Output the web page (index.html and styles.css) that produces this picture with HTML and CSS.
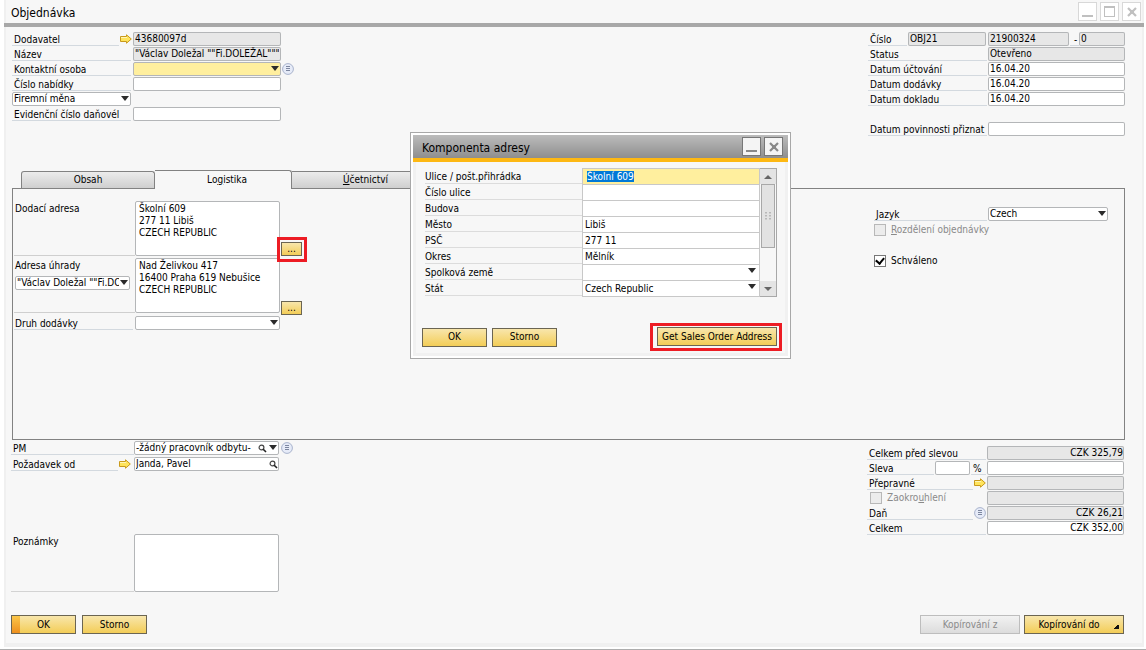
FILE: index.html
```html
<!DOCTYPE html>
<html lang="cs">
<head>
  <meta charset="UTF-8">
  <meta name="viewport" content="width=device-width, initial-scale=1.0">
  <title>Objednávka</title>
  <link rel="stylesheet" href="styles.css">
</head>
<body>
  <!-- shared icons -->
  <svg class="defs" width="0" height="0">
    <symbol id="arrow" viewBox="0 0 12 10">
      <path d="M.5 2.500h6V.8L11.300 5 6.500 9.200V7.500h-6z" fill="#ffe45c" stroke="#c99a1c"/>
      <path d="M1 3.500h6" stroke="#fff6b8"/>
    </symbol>
    <symbol id="list" viewBox="0 0 12 12">
      <circle cx="6" cy="6" r="5.400" fill="#e6ebf8" stroke="#a9b3cc"/>
      <path d="M4 3.500h4M4 5.500h4M4 7.500h4" stroke="#7d87a0"/>
    </symbol>
    <symbol id="lens" viewBox="0 0 9 9">
      <circle cx="3.500" cy="3.500" r="2.400" fill="#fff" stroke="#444" stroke-width="1.200"/>
      <path d="M5.200 5.200l2.800 2.800" stroke="#222" stroke-width="1.600"/>
    </symbol>
    <symbol id="cross" viewBox="0 0 10 10">
      <path d="M1 1l8 8M9 1L1 9" stroke="currentColor" stroke-width="2.200"/>
      <path d="M3 3h4v4H3z" fill="currentColor"/>
    </symbol>
  </svg>

  <main class="window">
    <header class="titlebar">
      <h1>Objednávka</h1>
      <div class="winButtons">
        <button class="winBtn" aria-label="Minimalizovat"><span class="minIcon"></span></button>
        <button class="winBtn" aria-label="Maximalizovat"><span class="maxIcon"></span></button>
        <button class="winBtn" aria-label="Zavřít"><svg width="10" height="10"><use href="#cross"/></svg></button>
      </div>
    </header>

    <section class="top">
      <div class="form left">
        <div class="row"><label class="lbl short" for="dodavatel">Dodavatel</label><svg class="arrow"><use href="#arrow"/></svg><input class="field" id="dodavatel" value="43680097d" readonly></div>
        <div class="row"><label class="lbl" for="nazev">Název</label><input class="field" id="nazev" value='"Václav Doležal ""Fi.DOLEŽAL"""' readonly></div>
        <div class="row"><label class="lbl" for="osoba">Kontaktní osoba</label><span class="drop yellow"><select id="osoba"><option></option></select></span><svg class="list"><use href="#list"/></svg></div>
        <div class="row"><label class="lbl" for="nabidka">Číslo nabídky</label><input class="field" id="nabidka"></div>
        <div class="row"><span class="drop currency"><select aria-label="Měna"><option>Firemní měna</option></select></span></div>
        <div class="row"><label class="lbl" for="evidence">Evidenční číslo daňovél</label><input class="field" id="evidence"></div>
      </div>

      <div class="form right">
        <div class="row">
          <label class="lbl num" for="serie">Číslo</label><input class="field serie" id="serie" value="OBJ21" readonly>
          <input class="field docnum" aria-label="Číslo dokladu" value="21900324" readonly><span class="lbl dash">-</span><input class="field sub" aria-label="Podčíslo" value="0" readonly>
        </div>
        <div class="row"><label class="lbl" for="status">Status</label><input class="field" id="status" value="Otevřeno" readonly></div>
        <div class="row"><label class="lbl" for="uctovani">Datum účtování</label><input class="field" id="uctovani" value="16.04.20"></div>
        <div class="row"><label class="lbl" for="dodavky">Datum dodávky</label><input class="field" id="dodavky" value="16.04.20"></div>
        <div class="row"><label class="lbl" for="dokladu">Datum dokladu</label><input class="field" id="dokladu" value="16.04.20"></div>
        <div class="row"></div>
        <div class="row"><label class="lbl" for="povinnost">Datum povinnosti přiznat</label><input class="field" id="povinnost"></div>
      </div>
    </section>

    <nav class="tabs">
      <button class="tab">Obsah</button>
      <button class="tab active">Lo<u>g</u>istika</button>
      <button class="tab"><u>Ú</u>četnictví</button>
    </nav>

    <section class="panel">
      <div class="addresses">
        <div class="address">
          <div class="side"><label for="dodaci">Dodací adresa</label></div>
          <textarea id="dodaci" class="area">Školní 609
277 11 Libiš
CZECH REPUBLIC</textarea>
          <span class="mark small"><button class="btn dots">...</button></span>
        </div>
        <div class="address">
          <div class="side">
            <label for="uhrada">Adresa úhrady</label>
            <span class="drop payer"><select aria-label="Adresa plátce"><option>"Václav Doležal ""Fi.DOLEŽAL"""</option></select></span>
          </div>
          <textarea id="uhrada" class="area">Nad Želivkou 417
16400 Praha 619 Nebušice
CZECH REPUBLIC</textarea>
          <button class="btn dots">...</button>
        </div>
        <div class="row"><label class="lbl" for="druh">Druh dodávky</label><span class="drop"><select id="druh"><option></option></select></span></div>
      </div>

      <div class="options">
        <div class="row"><label class="lbl" for="jazyk">Jazyk</label><span class="drop"><select id="jazyk"><option>Czech</option></select></span></div>
        <label class="check off"><input type="checkbox" disabled><span><u>R</u>ozdělení objednávky</span></label>
        <label class="check approved"><input type="checkbox" checked><span>Schváleno</span></label>
      </div>
    </section>

    <section class="bottom">
      <div class="form owner">
        <div class="row"><label class="lbl" for="pm">PM</label><span class="drop pm"><select id="pm"><option>-žádný pracovník odbytu-</option></select><svg class="lens"><use href="#lens"/></svg></span><svg class="list"><use href="#list"/></svg></div>
        <div class="row"><label class="lbl short" for="pozadavek">Požadavek od</label><svg class="arrow"><use href="#arrow"/></svg><span class="search"><input class="field" id="pozadavek" value="Janda, Pavel"><svg class="lens"><use href="#lens"/></svg></span></div>
        <div class="notes"><label for="poznamky">Poznámky</label><textarea class="area" id="poznamky"></textarea></div>
      </div>

      <div class="form right totals">
        <div class="row"><label class="lbl" for="pred">Celkem před slevou</label><input class="field" id="pred" value="CZK 325,79" readonly></div>
        <div class="row"><label class="lbl disc" for="sleva">Sleva</label><input class="field pct" id="sleva"><span class="lbl sign">%</span><input class="field" aria-label="Částka slevy"></div>
        <div class="row"><label class="lbl short" for="prepravne">Přepravné</label><svg class="arrow"><use href="#arrow"/></svg><input class="field" id="prepravne" readonly></div>
        <div class="row"><label class="check off"><input type="checkbox" disabled><span>Zaokro<u>u</u>hlení</span></label><input class="field" aria-label="Zaokrouhlení" readonly></div>
        <div class="row"><label class="lbl short" for="dan">Daň</label><svg class="list"><use href="#list"/></svg><input class="field" id="dan" value="CZK 26,21" readonly></div>
        <div class="row"><label class="lbl" for="celkem">Celkem</label><input class="field" id="celkem" value="CZK 352,00"></div>
      </div>
    </section>

    <footer class="actions">
      <button class="btn primary">OK</button>
      <button class="btn">Storno</button>
      <span class="spacer"></span>
      <button class="btn wide" disabled>Kopírování z</button>
      <button class="btn wide more">Kopírování do</button>
    </footer>
  </main>

  <div class="dialog" role="dialog" aria-labelledby="dlgTitle">
    <header class="dlgTitle">
      <h2 id="dlgTitle">Komponenta adresy</h2>
      <div class="winButtons">
        <button class="winBtn" aria-label="Minimalizovat"><span class="minIcon"></span></button>
        <button class="winBtn" aria-label="Zavřít"><svg width="10" height="10"><use href="#cross"/></svg></button>
      </div>
    </header>
    <div class="dlgBody">
      <div class="grid">
        <div class="cells">
          <label for="ulice">Ulice / pošt.přihrádka</label><input id="ulice" class="current" value="Školní 609">
          <label for="cislo">Číslo ulice</label><input id="cislo">
          <label for="budova">Budova</label><input id="budova">
          <label for="mesto">Město</label><input id="mesto" value="Libiš">
          <label for="psc">PSČ</label><input id="psc" value="277 11">
          <label for="okres">Okres</label><input id="okres" value="Mělník">
          <label for="zeme">Spolková země</label><span class="drop"><select id="zeme"><option></option></select></span>
          <label for="stat">Stát</label><span class="drop"><select id="stat"><option>Czech Republic</option></select></span>
        </div>
        <div class="scroll">
          <span class="up"></span>
          <span class="thumb"><svg width="6" height="8"><path d="M1 0v8M5 0v8" stroke="#aaa" stroke-width="1.500" stroke-dasharray="1.500 1.500"/></svg></span>
          <span class="down"></span>
        </div>
      </div>
      <div class="dlgActions">
        <button class="btn">OK</button>
        <button class="btn">Storno</button>
        <span class="spacer"></span>
        <span class="mark"><button class="btn get">Get Sales Order Address</button></span>
      </div>
    </div>
  </div>

  <script>
    // first cell is being edited
    const street = document.getElementById("ulice");
    street.focus();
    street.select();
  </script>
</body>
</html>
```

FILE: styles.css
```css
* {
  box-sizing: border-box;
}

body {
  margin: 0;
  padding: 0 2px 2px 4px;
  min-height: 100vh;
  display: flex;
  background: #fff;
  border-bottom: 1px solid #adadad;
  color: #000;
}

body, input, select, textarea, button {
  font-family: "DejaVu Sans Condensed", "DejaVu Sans", Tahoma, sans-serif;
  font-size: 10px;
  line-height: 12px;
}

input, select, textarea, button {
  margin: 0;
  outline: none;
}

.defs {
  position: absolute;
}

.window {
  flex: 1;
  display: flex;
  flex-direction: column;
  background: #f7f7f7;
  border: solid #f0f0f0;
  border-width: 0 2px 4px;
}

/* title bars */
.titlebar {
  display: flex;
  justify-content: space-between;
  align-items: center;
  height: 27px;
  margin: 0 -2px;
  padding: 0 3px 0 7px;
  border-bottom: 4px solid #a8a8a8;
}

h1, h2 {
  margin: 0;
  font-size: 12px;
  line-height: 16px;
  font-weight: normal;
}

.titlebar h1, .dlgTitle h2 {
  padding-top: 2px;
}

.winButtons {
  display: flex;
  gap: 3px;
}

.winBtn {
  display: flex;
  align-items: center;
  justify-content: center;
  width: 19px;
  height: 19px;
  padding: 0;
  border: 1px solid #d8d8d8;
  background: #fff;
  color: #c0c0c0;
}

.minIcon {
  width: 11px;
  height: 11px;
  border-bottom: 2px solid currentColor;
}

.maxIcon {
  width: 11px;
  height: 11px;
  border: 1px solid currentColor;
  border-top-width: 2px;
}

/* form rows */
.top, .bottom {
  display: flex;
  justify-content: space-between;
}

.top {
  padding: 5px 17px 33px 6px;
}

.left {
  width: 300px;
}

.right {
  width: 257px;
}

.row {
  display: flex;
  height: 15px;
}

.lbl {
  flex: none;
  width: 119px;
  height: 14px;
  margin-right: 2px;
  padding: 2px 0 0 2px;
  border-bottom: 1px solid #d3d9df;
  white-space: nowrap;
}

.right .lbl, .options .lbl {
  margin-right: 1px;
}

.lbl.short {
  width: 107px;
  margin-right: 0;
}

.right .lbl.short {
  width: 106px;
  margin-right: 0;
}

.arrow {
  flex: none;
  width: 12px;
  height: 10px;
  margin: 2px 1px 0;
}

.list {
  flex: none;
  width: 12px;
  height: 12px;
  margin: 1px;
}

.drop select, .area {
  border: 1px solid #b4b6b8;
  border-radius: 2px;
  background: #fff;
  color: #000;
}

/* inset line instead of a border, so tall accents are not cut */
.field {
  flex: 1;
  min-width: 0;
  height: 14px;
  padding: 0 2px;
  border: none;
  border-radius: 2px;
  box-shadow: inset 0 0 0 1px #b4b6b8;
  background: #fff;
  color: #000;
  line-height: 14px;
}

.field:read-only {
  background: #e7e7e7;
}

.left .field, .left .drop {
  flex: none;
  width: 148px;
}

.drop {
  position: relative;
  display: block;
  width: 145px;
  height: 14px;
}

.drop select {
  appearance: none;
  display: block;
  width: 100%;
  height: 100%;
  padding: 0 10px 0 1px;
}

.drop::after {
  content: "";
  position: absolute;
  top: 4px;
  right: 2px;
  border: solid transparent;
  border-width: 5px 4px 0;
  border-top-color: #2b2b2b;
  pointer-events: none;
}

.yellow select {
  background: #ffef9e;
}

.left .currency {
  width: 119px;
}

.right .num {
  width: 39px;
}

.serie {
  flex: none;
  width: 78px;
  margin-right: 2px;
}

.docnum {
  flex: none;
  width: 81px;
}

.right .dash {
  width: 9px;
  margin-left: 1px;
  padding-left: 4px;
  margin-right: 0;
}

/* tabs */
.tabs {
  display: flex;
  align-items: flex-end;
  height: 18px;
  padding-left: 15px;
}

.tab {
  width: 136px;
  height: 17px;
  padding: 0;
  border: 1px solid #828282;
  border-width: 1px 1px 0 0;
  border-radius: 0 3px 0 0;
  background: linear-gradient(#ececec, #cfcfcf);
}

.tab:first-child {
  width: 134px;
  border-left-width: 1px;
  border-radius: 3px 3px 0 0;
}

.tab:last-child {
  width: 148px;
}

.tab.active {
  z-index: 1;
  width: 137px;
  height: 19px;
  margin-bottom: -1px;
  padding-left: 8px;
  background: #f7f7f7;
}

.panel {
  flex: 1;
  display: flex;
  justify-content: space-between;
  margin: 0 17px 0 6px;
  padding: 12px 16px 0 1px;
  border: 1px solid #828282;
}

.address {
  display: flex;
  align-items: flex-end;
  height: 57px;
}

.side {
  width: 121px;
  height: 55px;
  margin-bottom: 2px;
  padding: 2px 0 0 1px;
  border-bottom: 1px solid #cfcfcf;
}

.side label {
  display: block;
}

.payer {
  width: 115px;
  margin-top: 4px;
}

.area {
  width: 145px;
  height: 55px;
  margin-bottom: 2px;
  padding: 1px 3px 0;
  resize: none;
  overflow: hidden;
}

.address .dots {
  width: 21px;
  height: 14px;
  margin-left: 1px;
}

.addresses .row {
  margin-top: 1px;
}

.mark {
  display: flex;
  border: 3px solid #ed1c24;
}

/* highlight frame hangs over the neighbouring box */
.mark.small {
  z-index: 1;
  margin: 0 0 -4px -3px;
  padding: 2px 2px 3px 1px;
}

.mark.small .dots {
  margin: 0;
}

.addresses .lbl {
  margin-right: 2px;
  padding-left: 1px;
}

.options {
  width: 234px;
  padding-top: 6px;
}

.options .lbl {
  width: 113px;
}

.options .drop {
  width: 120px;
}

.check {
  display: flex;
  align-items: center;
  gap: 5px;
  margin-top: 2px;
}

.check input {
  appearance: none;
  display: grid;
  place-items: center;
  width: 12px;
  height: 12px;
  border: 1px solid #777;
  background: #fff;
}

.check input:checked::before {
  content: "";
  width: 4px;
  height: 6px;
  margin-bottom: 2px;
  border: solid #000;
  border-width: 0 2px 2px 0;
  transform: rotate(40deg);
}

.check.off {
  color: #8a8a8a;
}

.check.off input {
  border-color: #b8b8b8;
  background: #ececec;
}

.approved {
  margin-top: 19px;
}

/* bottom part */
.bottom {
  padding: 1px 18px 0 5px;
}

.owner .row {
  height: 16px;
}

.owner .lbl {
  width: 123px;
  margin-right: 0;
}

.owner .lbl.short {
  width: 107px;
}

.owner .arrow {
  margin-right: 3px;
}

.owner .list {
  margin-left: 2px;
}

.search {
  position: relative;
  display: flex;
  width: 145px;
}

.lens {
  position: absolute;
  top: 3px;
  right: 1px;
  width: 9px;
  height: 9px;
}

.pm .lens {
  right: 12px;
}

.pm select {
  padding-right: 0;
}

.notes {
  display: flex;
  margin-top: 61px;
}

.notes label {
  width: 123px;
  height: 58px;
  padding: 2px;
  border-bottom: 1px solid #d3d3d3;
}

.notes .area {
  height: 58px;
  margin: 0;
}

.totals {
  padding-top: 5px;
}

.totals .field {
  text-align: right;
  padding: 0 1px;
}

.right .disc {
  width: 67px;
}

.totals .pct {
  flex: none;
  width: 35px;
}

.right .sign {
  width: 15px;
  margin-left: 1px;
}

.totals .check {
  width: 120px;
  height: 14px;
  margin: 0;
  padding-left: 3px;
}

/* buttons */
.btn {
  width: 65px;
  height: 19px;
  padding: 0;
  border: 1px solid #6b6552;
  background: linear-gradient(#f8e6ac, #f3cd57);
  color: #000;
}

.actions {
  display: flex;
  gap: 6px;
  padding: 23px 18px 9px 5px;
}

.spacer {
  flex: 1;
}

.btn.primary {
  background: linear-gradient(#fbc74a, #ee8f1d) no-repeat 0 0 / 8px 100%, linear-gradient(#f8e6ac, #f3cd57);
}

.btn.wide {
  width: 100px;
}

.btn:disabled {
  border-color: #bdbdbd;
  background: linear-gradient(#f2f2f2, #dcdcdc);
  color: #8a8a8a;
}

.more {
  position: relative;
  padding-right: 10px;
  margin-left: -2px;
}

.more::after {
  content: "";
  position: absolute;
  right: 4px;
  bottom: 4px;
  width: 5px;
  height: 5px;
  background: linear-gradient(135deg, transparent 50%, #111 50%);
}

/* address dialog */
.dialog {
  position: absolute;
  left: 410px;
  top: 132px;
  width: 381px;
  padding: 2px;
  border: 1px solid #a8a8a8;
  background: #fff;
}

.dlgTitle {
  display: flex;
  justify-content: space-between;
  align-items: center;
  height: 27px;
  padding: 0 5px 0 9px;
  border-bottom: 4px solid #fdb813;
  background: linear-gradient(#bcbcbc, #8e8e8e);
}

.dlgTitle .winBtn {
  border-color: #777;
  background: #f4f4f4;
  color: #888;
}

.dlgBody {
  padding: 6px 8px 2px 9px;
  border: solid #f1f1f1;
  border-width: 0 3px 3px;
  background: #f7f7f7;
}

.grid {
  display: flex;
  height: 129px;
}

.cells {
  flex: 1;
  display: grid;
  grid-template-columns: 157px 1fr;
  grid-auto-rows: 16px;
}

.cells label {
  border-bottom: 1px solid #dcdcdc;
  padding-top: 3px;
}

.cells input, .cells .drop select {
  width: 100%;
  height: 17px;
  padding: 0 2px;
  border: 1px solid #c8c8c8;
  border-radius: 0;
  background: #fff;
  line-height: 15px;
}

.cells .drop {
  width: auto;
  height: 17px;
}

.cells .drop::after {
  right: 4px;
}

.cells .current {
  padding-left: 4px;
  background: #ffef9e;
}

.current::selection {
  background: #0078d7;
  color: #fff;
}

.scroll {
  display: flex;
  flex-direction: column;
  width: 17px;
  border: 1px solid #a8a8a8;
  border-left: none;
}

.up, .down {
  display: grid;
  place-items: center;
  height: 15px;
  background: #e4e4e4;
}

.up::before, .down::before {
  content: "";
  border: solid transparent;
  border-width: 0 4px 4px;
  border-bottom-color: #666;
}

.down {
  margin-top: auto;
}

.down::before {
  border-width: 4px 4px 0;
  border-top-color: #666;
}

.thumb {
  display: grid;
  place-items: center;
  height: 64px;
  margin: 0 1px;
  border: 1px solid #a8a8a8;
  background: #e2e2e2;
}

.dlgActions {
  display: flex;
  align-items: center;
  gap: 5px;
  margin: 26px -5px 0 -3px;
}

.dlgActions .mark {
  padding: 1px 2px 2px 4px;
}

.get {
  width: 120px;
}
```
